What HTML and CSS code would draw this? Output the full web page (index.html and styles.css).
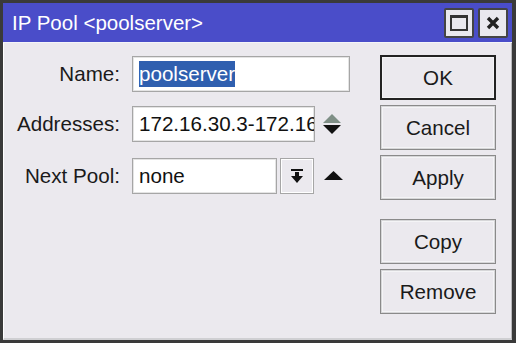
FILE: index.html
```html
<!DOCTYPE html>
<html lang="en">
<head>
  <meta charset="UTF-8" />
  <title>IP Pool &lt;poolserver&gt;</title>
  <link rel="stylesheet" href="styles.css">
</head>
<body>
  <div class="window">
    <div class="titlebar">
      <span class="title">IP Pool &lt;poolserver&gt;</span>
      <div class="title-btns">
        <button class="tbtn"><span class="max-icon"></span></button>
        <button class="tbtn">
          <svg width="16" height="16" viewBox="0 0 16 16"><path d="M3 3 L13 13 M13 3 L3 13" stroke="#222" stroke-width="3.4"/></svg>
        </button>
      </div>
    </div>

    <div class="content">
      <div class="form">
        <div class="row">
          <label class="lbl">Name:</label>
          <div class="field w-name"><span class="sel">poolserver</span></div>
        </div>
        <div class="row">
          <label class="lbl">Addresses:</label>
          <div class="field w-addr">172.16.30.3-172.16.30.254</div>
          <svg class="spin" width="18" height="22" viewBox="0 0 18 22">
            <path d="M0 10 L9 1 L18 10 Z" fill="#7f8f86"/>
            <path d="M0 12 L9 21 L18 12 Z" fill="#111"/>
          </svg>
        </div>
        <div class="row">
          <label class="lbl">Next Pool:</label>
          <div class="field w-next">none</div>
          <button class="dd">
            <svg width="12" height="16" viewBox="0 0 12 16"><path d="M0 1 H12 V3 H0 Z" fill="#111"/><path d="M4 4 H8 V8 H4 Z" fill="#111"/><path d="M0 8 H12 L6 15 Z" fill="#111"/></svg>
          </button>
          <svg class="up" width="19" height="11" viewBox="0 0 19 11"><path d="M0 10 L9.5 1 L19 10 Z" fill="#111"/></svg>
        </div>
      </div>

      <div class="actions">
        <button class="btn btn-default">OK</button>
        <button class="btn">Cancel</button>
        <button class="btn">Apply</button>
        <button class="btn btn-sep">Copy</button>
        <button class="btn">Remove</button>
      </div>
    </div>
  </div>
</body>
</html>
```

FILE: styles.css
```css
* { box-sizing: border-box; margin: 0; padding: 0; }
html, body { width: 516px; height: 343px; overflow: hidden; }
body { font-family: "Liberation Sans", Arial, sans-serif; background: #3a3a3a; }
.window { width: 516px; height: 343px; border: 3px solid #3a3a3a; border-right-width: 4px; display: flex; flex-direction: column; background: #ebe9ee; }
.titlebar { height: 40px; background: #4a4dc9; display: flex; align-items: center; justify-content: space-between; padding: 0 4px 0 9px; border-bottom: 1px solid #f4f4f8; }
.title { color: #fff; font-size: 20.5px; }
.title-btns { display: flex; gap: 4px; padding-top: 1px; }
.tbtn { width: 30px; height: 30px; background: #e9e8ee; border: 2px solid #444; border-radius: 2px; display: flex; align-items: center; justify-content: center; }
.max-icon { width: 18px; height: 16px; border: 2px solid #333; border-top-width: 3px; }

.content { flex: 1; display: flex; border-left: 1px solid #fff; border-bottom: 2px solid #cfcfd2; border-right: 1px solid #b8b8bb; }
.form { width: 376px; padding-top: 13px; display: flex; flex-direction: column; }
.row { display: flex; align-items: center; height: 36px; margin-bottom: 14px; }
.row:nth-child(2) { margin-bottom: 16px; }
.lbl { width: 116px; text-align: right; font-size: 20.6px; color: #1a1a1a; margin-right: 12px; white-space: nowrap; }
.field { height: 100%; background: #fff; border: 1px solid #a6a6a6; box-shadow: inset 0 0 0 1px #e4e4e4; font-size: 20.6px; color: #111; padding-left: 6px; display: flex; align-items: center; white-space: nowrap; overflow: hidden; }
.w-name { width: 218px; }
.w-addr { width: 183px; }
.w-next { width: 145px; }
.sel { background: #2f5faf; color: #fff; padding: 1px 0; }
.spin { margin-left: 8px; }
.dd { width: 34px; height: 100%; margin-left: 3px; background: #ebe9ee; border: 1px solid #a6a6a6; box-shadow: inset 0 0 0 1px #fff; display: flex; align-items: center; justify-content: center; }
.up { margin-left: 10px; margin-top: -1px; }

.actions { display: flex; flex-direction: column; gap: 5px; padding-top: 12px; }
.btn { width: 116px; height: 45px; font-family: "Liberation Sans", Arial, sans-serif; font-size: 20.6px; color: #1a1a1a; background: #ebe9ee; border: 1px solid #8a8a8a; box-shadow: inset 0 0 0 1px #d6d6d8, inset 0 0 0 2px #f4f4f6; }
.btn-default { border: 2px solid #222; box-shadow: inset 0 0 0 1px #f4f4f6; }
.btn-sep { margin-top: 14px; }
```
